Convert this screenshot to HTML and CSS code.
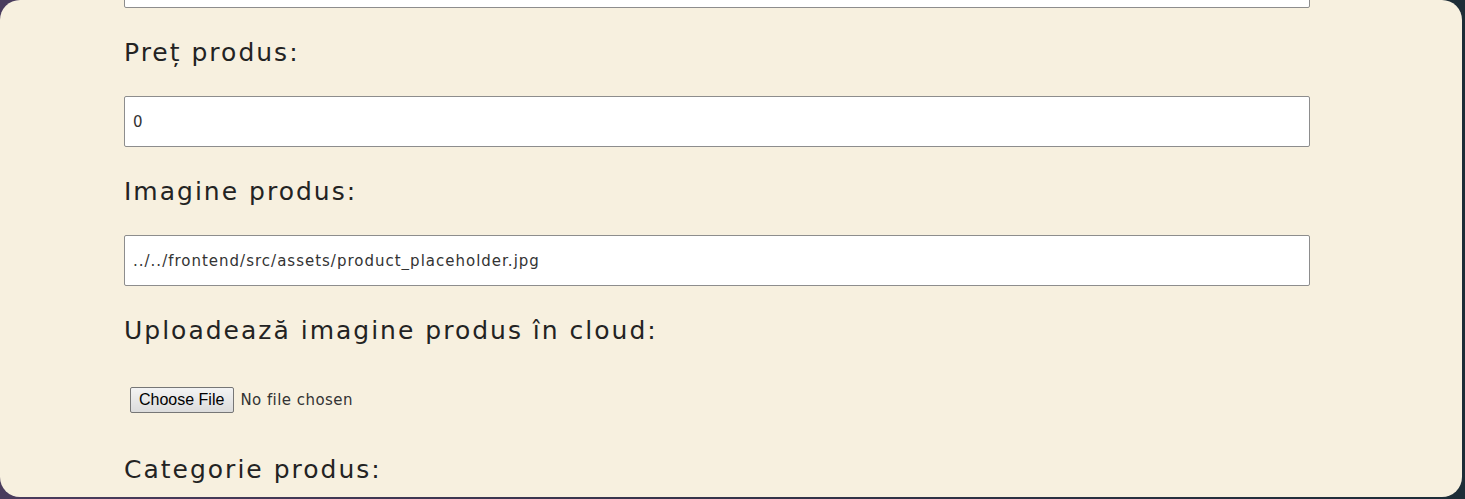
FILE: index.html
```html
<!DOCTYPE html>
<html lang="ro">
<head>
<meta charset="utf-8">
<title>Produs</title>
<link rel="stylesheet" href="styles.css">
</head>
<body>
<div class="card">
  <form class="form">
    <input class="field field-cut" type="text" value="">
    <label class="label" for="pret">Preț produs:</label>
    <input class="field" id="pret" type="text" value="0">
    <label class="label" for="img">Imagine produs:</label>
    <input class="field" id="img" type="text" value="../../frontend/src/assets/product_placeholder.jpg">
    <label class="label" for="up">Uploadează imagine produs în cloud:</label>
    <input class="file" id="up" type="file">
    <label class="label label-last" for="cat">Categorie produs:</label>
  </form>
</div>
</body>
</html>
```
FILE: styles.css
```css
html, body {
  margin: 0;
  padding: 0;
}
body {
  width: 1465px;
  height: 499px;
  overflow: hidden;
  background: linear-gradient(90deg, #4a3c5d 0%, #35344a 50%, #1d2d37 100%);
  font-family: "DejaVu Sans", "Open Sans", sans-serif;
}
.card {
  width: 1462px;
  height: 497px;
  background: #f7f0df;
  border-radius: 20px;
  overflow: hidden;
  box-sizing: border-box;
  padding-left: 124px;
}
.form {
  display: flex;
  flex-direction: column;
  align-items: flex-start;
}
.label {
  display: block;
  font-family: "DejaVu Sans", "Open Sans", sans-serif;
  font-size: 25px;
  line-height: 30px;
  color: #232323;
  margin: 30px 0 28px;
  letter-spacing: 2px;
}
.field {
  box-sizing: border-box;
  width: 1186px;
  height: 51px;
  margin: 0;
  padding: 0 8px;
  border: 1.5px solid #8d8d8d;
  border-radius: 2px;
  background: #fff;
  font-family: "DejaVu Sans", "Open Sans", sans-serif;
  font-size: 15px;
  color: #333;
  letter-spacing: 1px;
}
.field-cut {
  margin-top: -43px;
}
.file {
  margin: 13px 0 0 6px;
  font-family: "DejaVu Sans", "Open Sans", sans-serif;
  font-size: 15px;
  color: #333;
  letter-spacing: 0.45px;
  height: 26px;
}
.file::file-selector-button {
  font-family: "Liberation Sans", Arial, sans-serif;
  font-size: 16px;
  letter-spacing: 0;
  height: 26px;
  padding: 0 9px 0 8px;
  margin-right: 6px;
  border: 1px solid #767676;
  border-radius: 2px;
  background: linear-gradient(#f3f3f3, #dcdcdc);
  color: #000;
}
.label-last {
  margin-top: 42px;
}
```
